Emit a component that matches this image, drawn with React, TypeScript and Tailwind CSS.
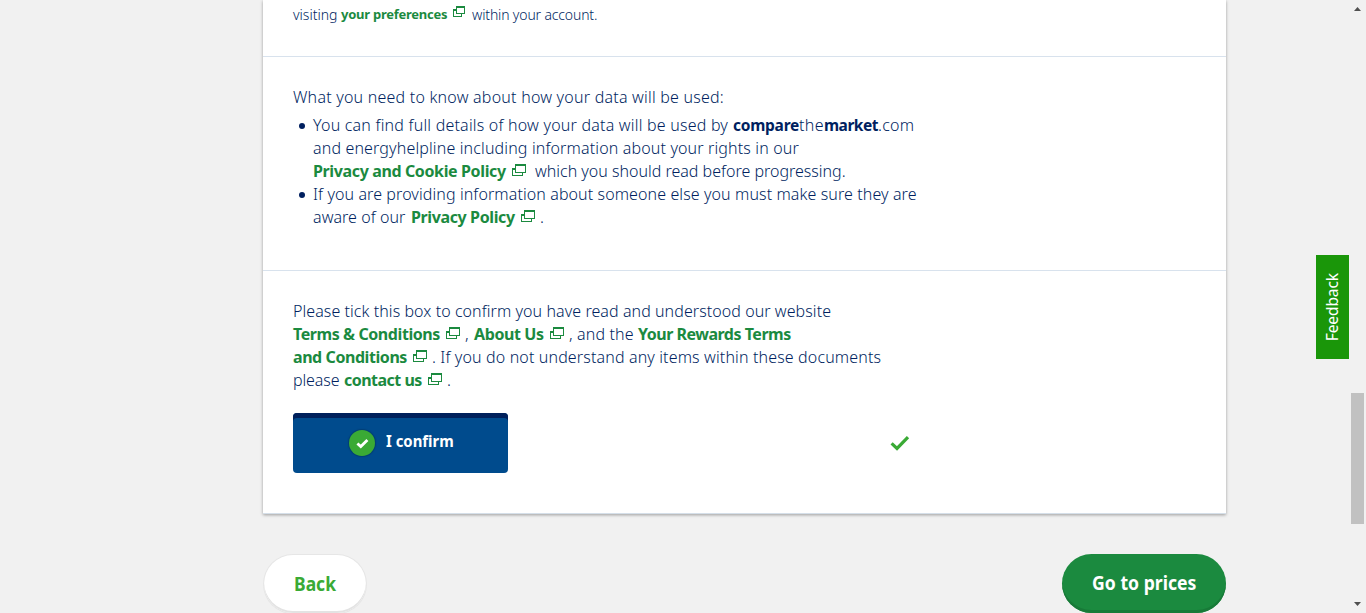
import type { ReactNode } from "react";

function WindowIcon({ className = "" }: { className?: string }) {
  return (
    <svg viewBox="0 0 14 12" className={`h-3 w-3.5 shrink-0 fill-[#1b8a3f] ${className}`} shapeRendering="crispEdges" aria-hidden="true">
      <path fillRule="evenodd" d="M3 0H14V9H3ZM4 2V8H13V2Z" />
      <path d="M0 4H3V6H1V11H10V9H11V12H0Z" />
    </svg>
  );
}

function SmallWindowIcon({ className = "" }: { className?: string }) {
  return (
    <svg viewBox="0 0 12 11" className={`h-[11px] w-3 shrink-0 fill-[#1b8a3f] ${className}`} shapeRendering="crispEdges" aria-hidden="true">
      <path fillRule="evenodd" d="M3 0H12V8H3ZM4 2V7H11V2Z" />
      <path d="M0 3H3V5H1V10H8V8H9V11H0Z" />
    </svg>
  );
}

function Tick({ className = "" }: { className?: string }) {
  return (
    <svg viewBox="0 0 20 16" className={className} aria-hidden="true">
      <path d="M1.6 8.4 7 13.4 18 2.2" fill="none" stroke="currentColor" strokeWidth="3.2" />
    </svg>
  );
}

function Row({ children }: { children: ReactNode }) {
  return <div className="flex h-[23px] whitespace-nowrap leading-[23px]">{children}</div>;
}

function Link({ children, className = "" }: { children: ReactNode; className?: string }) {
  return <a href="#" className={`shrink-0 font-bold text-[#1b8a3f] ${className}`}>{children}</a>;
}

function Bullet({ children }: { children: ReactNode }) {
  return (
    <li className="flex">
      <span className="mt-[9px] ml-1.5 mr-2 h-1.5 w-1.5 shrink-0 rounded-full bg-[#001f5f]" />
      <div>{children}</div>
    </li>
  );
}

export default function App() {
  return (
    <div className="flex h-[613px] w-[1366px] overflow-hidden bg-[#f1f1f1] font-['Noto_Sans',sans-serif] text-[16px] font-light text-[#001f5f]">
      <main className="ml-[263px] flex w-[963px] shrink-0 flex-col">
        <section className="h-[514px] shrink-0 border-b border-[#d5dfe9] bg-white shadow-[0_1px_3px_rgba(0,0,0,0.35)]">
          <div className="h-[57px] border-b border-[#d8e2ed] pl-[30px] pt-[3px] text-[14px]">
            <Row>
              <span className="w-12 shrink-0">visiting</span>
              <Link className="w-28 text-[13px] tracking-[-0.25px]">your preferences</Link>
              <SmallWindowIcon className="mt-[3px]" />
              <span className="ml-[7px] tracking-[-0.15px]">within your account.</span>
            </Row>
          </div>

          <div className="h-[214px] border-b border-[#d8e2ed] pl-[30px] pt-[29px]">
            <Row><span className="tracking-[0.22px]">What you need to know about how your data will be used:</span></Row>
            <ul className="mt-[5px]">
              <Bullet>
                <Row>
                  <span className="w-[420px] shrink-0 tracking-[0.21px]">You can find full details of how your data will be used by</span>
                  <b className="w-[66px] shrink-0 text-[15.5px] font-bold tracking-[-0.25px]">compare</b>
                  <span className="w-[25px] shrink-0 tracking-[0.35px]">the</span>
                  <b className="w-[54px] shrink-0 text-[15.5px] font-bold tracking-[-0.5px]">market</b>
                  <span className="tracking-[0.3px]">.com</span>
                </Row>
                <Row><span className="tracking-[0.145px]">and energyhelpline including information about your rights in our</span></Row>
                <Row>
                  <Link className="w-[199px] tracking-[-0.37px]">Privacy and Cookie Policy</Link>
                  <WindowIcon className="mt-1" />
                  <span className="ml-[9px]">which you should read before progressing.</span>
                </Row>
              </Bullet>
              <Bullet>
                <Row><span className="tracking-[0.1px]">If you are providing information about someone else you must make sure they are</span></Row>
                <Row>
                  <span className="w-[98px] shrink-0 tracking-[0.05px]">aware of our</span>
                  <Link className="w-[110px] tracking-[-0.38px]">Privacy Policy</Link>
                  <WindowIcon className="mt-1" />
                  <span className="ml-[5px]">.</span>
                </Row>
              </Bullet>
            </ul>
          </div>

          <div className="pl-[30px] pt-[29px]">
            <Row><span className="tracking-[0.07px]">Please tick this box to confirm you have read and understood our website</span></Row>
            <Row>
              <Link className="w-[153px] tracking-[-0.42px]">Terms &amp; Conditions</Link>
              <WindowIcon className="mt-1" />
              <span className="ml-[5px] w-[9px] shrink-0">,</span>
              <Link className="w-[76px] tracking-[-0.4px]">About Us</Link>
              <WindowIcon className="mt-1" />
              <span className="ml-[5px] w-[69px] shrink-0 tracking-[0.15px]">, and the</span>
              <Link className="tracking-[-0.49px]">Your Rewards Terms</Link>
            </Row>
            <Row>
              <Link className="w-[120px] tracking-[-0.43px]">and Conditions</Link>
              <WindowIcon className="mt-1" />
              <span className="ml-[5px] tracking-[0.14px]">. If you do not understand any items within these documents</span>
            </Row>
            <Row>
              <span className="w-[51px] shrink-0 tracking-[-0.1px]">please</span>
              <Link className="w-[84px] tracking-[-0.52px]">contact us</Link>
              <WindowIcon className="mt-1" />
              <span className="ml-[5px]">.</span>
            </Row>
            <div className="mt-[21px] flex items-center">
              <button className="flex h-[60px] w-[215px] rounded-[4px] bg-[#004b8d] pl-14 pt-4 text-white shadow-[inset_0_5px_0_#00205b]">
                <span className="mt-px flex h-[26px] w-[26px] items-center justify-center rounded-full bg-[#3aaa35] shadow-[0_0_1px_1px_rgba(0,50,90,0.5)]">
                  <svg viewBox="0 0 13 11" className="h-[11px] w-[13px]" aria-hidden="true">
                    <path d="M1.4 5.4 4.8 8.6 11.4 2" fill="none" stroke="white" strokeWidth="2.8" />
                  </svg>
                </span>
                <span className="ml-[11px] origin-left scale-x-[0.93] text-[16px] font-bold leading-6">I confirm</span>
              </button>
              <Tick className="ml-[382px] h-4 w-5 text-[#3aaa35]" />
            </div>
          </div>
        </section>

        <div className="mt-10 flex shrink-0 justify-between pl-px">
          <button className="mt-px flex h-[58px] w-[102px] items-center justify-center rounded-full bg-white text-[20px] font-bold text-[#3aaa35] shadow-[inset_0_-2px_0_#e3e3e3,0_0_0_1px_#e6e6e6]">
            <span className="scale-x-[0.875]">Back</span>
          </button>
          <button className="flex h-[59px] w-[164px] items-center justify-center whitespace-nowrap rounded-full bg-[#1b8a3f] pb-px text-[20px] font-bold text-white shadow-[inset_0_-3px_0_#187a38]">
            <span className="scale-x-[0.88]">Go to prices</span>
          </button>
        </div>
      </main>

      <aside className="ml-[90px] mt-[255px] flex h-[104px] w-[33px] shrink-0 items-center justify-center bg-[#1a9609] font-normal text-white">
        <span className="rotate-180 text-[15.5px] tracking-[-0.1px] [writing-mode:vertical-rl]">Feedback</span>
      </aside>

      <div className="flex w-[17px] shrink-0 flex-col items-center bg-[#f1f1f1]">
        <svg viewBox="0 0 7 4" className="mt-[7px] h-1 w-[7px] fill-[#505050]" aria-hidden="true"><path d="M0 4 3.5 0 7 4Z" /></svg>
        <div className="mt-[382px] h-[131px] w-[13px] bg-[#c1c1c1]" />
        <svg viewBox="0 0 7 4" className="mt-[78px] h-1 w-[7px] fill-[#505050]" aria-hidden="true"><path d="M0 0H7L3.5 4Z" /></svg>
      </div>
    </div>
  );
}
